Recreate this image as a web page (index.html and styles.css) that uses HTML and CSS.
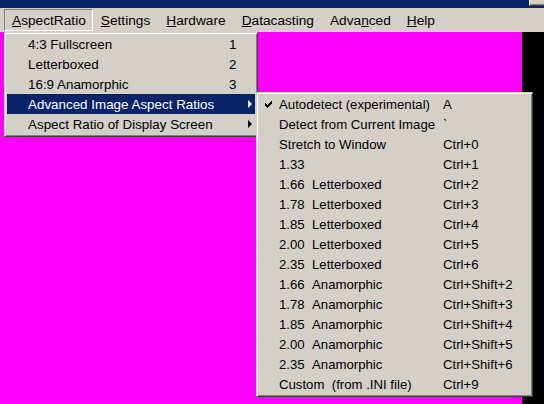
FILE: index.html
```html
<!DOCTYPE html>
<html>
<head>
<meta charset="utf-8">
<link rel="stylesheet" href="styles.css">
</head>
<body>
<div class="window">
  <div class="titlebar"><div class="tbtn"></div></div>
  <div class="menubar">
    <div class="mitem pressed"><u>A</u>spectRatio</div>
    <div class="mitem"><u>S</u>ettings</div>
    <div class="mitem"><u>H</u>ardware</div>
    <div class="mitem"><u>D</u>atacasting</div>
    <div class="mitem">Adva<u>n</u>ced</div>
    <div class="mitem"><u>H</u>elp</div>
  </div>
  <div class="content">
    <div class="video"></div>
    <div class="blackbar"></div>
  </div>

  <div class="menu menu1">
    <div class="row"><span></span><span>4:3 Fullscreen</span><span>1</span><span></span></div>
    <div class="row"><span></span><span>Letterboxed</span><span>2</span><span></span></div>
    <div class="row"><span></span><span>16:9 Anamorphic</span><span>3</span><span></span></div>
    <div class="row sel"><span></span><span>Advanced Image Aspect Ratios</span><span></span><span class="arrow"></span></div>
    <div class="row"><span></span><span>Aspect Ratio of Display Screen</span><span></span><span class="arrow"></span></div>
  </div>

  <div class="menu menu2">
    <div class="row"><span class="check"><svg width="8" height="7" viewBox="0 0 8 7"><path d="M0 2h1v1h1v1h1V3h1V2h1V1h1V0h1v3H6v1H5v1H4v1H3v1H2V6H1V5H0z" fill="#000"/></svg></span><span>Autodetect (experimental)</span><span>A</span></div>
    <div class="row"><span></span><span>Detect from Current Image</span><span>`</span></div>
    <div class="row"><span></span><span>Stretch to Window</span><span>Ctrl+0</span></div>
    <div class="row"><span></span><span>1.33</span><span>Ctrl+1</span></div>
    <div class="row"><span></span><span><span class="num">1.66</span>Letterboxed</span><span>Ctrl+2</span></div>
    <div class="row"><span></span><span><span class="num">1.78</span>Letterboxed</span><span>Ctrl+3</span></div>
    <div class="row"><span></span><span><span class="num">1.85</span>Letterboxed</span><span>Ctrl+4</span></div>
    <div class="row"><span></span><span><span class="num">2.00</span>Letterboxed</span><span>Ctrl+5</span></div>
    <div class="row"><span></span><span><span class="num">2.35</span>Letterboxed</span><span>Ctrl+6</span></div>
    <div class="row"><span></span><span><span class="num">1.66</span>Anamorphic</span><span>Ctrl+Shift+2</span></div>
    <div class="row"><span></span><span><span class="num">1.78</span>Anamorphic</span><span>Ctrl+Shift+3</span></div>
    <div class="row"><span></span><span><span class="num">1.85</span>Anamorphic</span><span>Ctrl+Shift+4</span></div>
    <div class="row"><span></span><span><span class="num">2.00</span>Anamorphic</span><span>Ctrl+Shift+5</span></div>
    <div class="row"><span></span><span><span class="num">2.35</span>Anamorphic</span><span>Ctrl+Shift+6</span></div>
    <div class="row"><span></span><span>Custom &nbsp;(from .INI file)</span><span>Ctrl+9</span></div>
  </div>
</div>
</body>
</html>
```
FILE: styles.css
```css
html, body {
  margin: 0;
  padding: 0;
  width: 544px;
  height: 404px;
  overflow: hidden;
}
body {
  font-family: "Liberation Sans", Arial, sans-serif;
  font-size: 13.4px;
  color: #000;
}
.window {
  position: relative;
  width: 544px;
  height: 404px;
  display: flex;
  flex-direction: column;
}
.titlebar {
  height: 8px;
  background: #0a246a;
  position: relative;
}
.tbtn {
  position: absolute;
  right: 0;
  top: 0;
  width: 14px;
  height: 5px;
  background: #d4d0c8;
  border-left: 1px solid #fff;
  border-bottom: 1px solid #404040;
  box-shadow: inset 0 -1px 0 #808080;
}
.menubar {
  height: 24px;
  background: #d4d0c8;
  display: flex;
  align-items: center;
  padding-left: 4px;
  font-size: 13.7px;
}
.mitem {
  height: 22px;
  line-height: 23px;
  padding: 0 8px 0 8px;
  box-sizing: border-box;
}
.mitem u { text-decoration: underline; text-underline-offset: 1px; }
.pressed {
  border-top: 1px solid #808080;
  border-left: 1px solid #808080;
  border-right: 1px solid #fff;
  border-bottom: 1px solid #fff;
  padding: 0 6px 0 7px;
  line-height: 21px;
}
.content {
  flex: 1;
  display: flex;
}
.video {
  width: 522px;
  background: #ff00ff;
}
.blackbar {
  flex: 1;
  background: #000;
}
.menu {
  position: absolute;
  background: #d4d0c8;
  box-sizing: border-box;
  border-top: 1px solid #d4d0c8;
  border-left: 1px solid #d4d0c8;
  border-right: 1px solid #404040;
  border-bottom: 1px solid #404040;
  box-shadow: inset 1px 1px 0 #fff, inset -1px -1px 0 #808080;
  padding: 1px 2px 2px 1px;
}
.menu1 {
  left: 4px;
  top: 32px;
  width: 254px;
}
.menu2 {
  left: 256px;
  top: 92px;
  width: 277px;
  font-size: 13.2px;
}
.row {
  height: 20px;
  display: grid;
  align-items: center;
  white-space: nowrap;
}
.menu1 .row {
  grid-template-columns: 21px 201px 19px 1fr;
  margin-left: 1px;
}
.menu2 .row {
  grid-template-columns: 20px 164px 1fr;
  margin-left: 1px;
}
.row.sel {
  background: #0a246a;
  color: #fff;
}
.check {
  display: flex;
  align-items: center;
  justify-content: flex-start;
  padding-left: 6px;
}
.num {
  display: inline-block;
  width: 33px;
}
.arrow {
  width: 0;
  height: 0;
  border-top: 4px solid transparent;
  border-bottom: 4px solid transparent;
  border-left: 4px solid #000;
}
.sel .arrow {
  border-left-color: #fff;
}
```
